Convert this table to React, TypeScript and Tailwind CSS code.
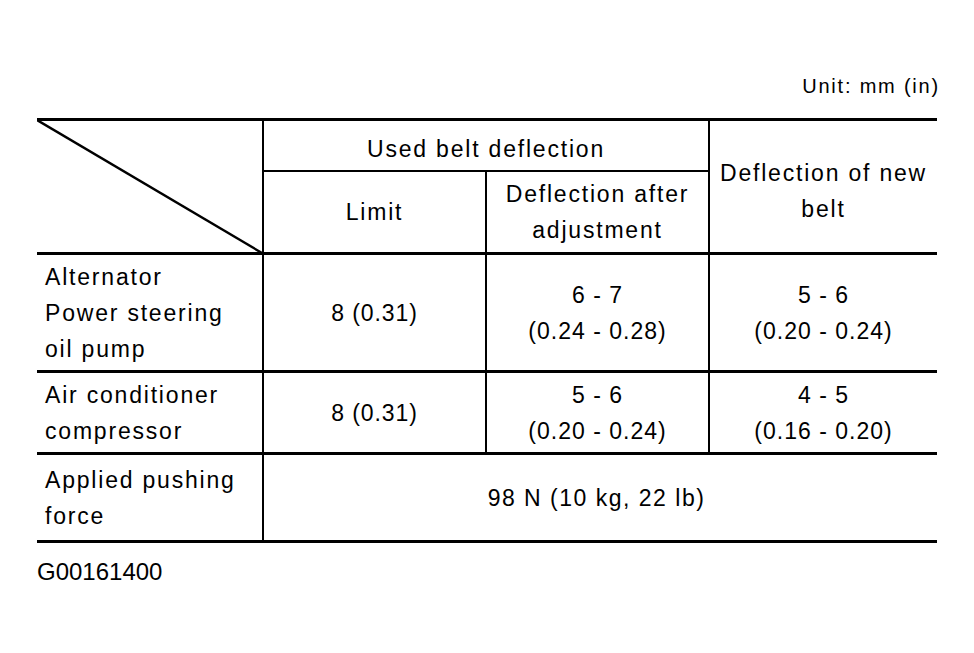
import React from "react";

const font = { fontFamily: '"Liberation Sans", Arial, Helvetica, sans-serif' };

function Lines({ lines }: { lines: string[] }) {
  return (
    <div>
      {lines.map((l, i) => (
        <div key={i}>{l}</div>
      ))}
    </div>
  );
}

export default function App() {
  return (
    <div
      className="w-[974px] h-[653px] bg-white text-black pt-[76px] pl-[37px]"
      style={font}
    >
      <div className="w-[903px] flex justify-end text-[20px] leading-[20px] tracking-[1.8px]">
        Unit: mm (in)
      </div>
      <div className="mt-[22px] w-[900px] border-t-[3px] border-b-[3px] border-black text-[23px] leading-[36px] tracking-[1.8px]">
        {/* Header */}
        <div className="flex h-[134px] border-b-[3px] border-black">
          <div className="relative w-[227px] shrink-0 border-r-2 border-black">
            <svg
              className="absolute left-0 top-0"
              width="227"
              height="134"
              viewBox="0 0 227 134"
            >
              <line x1="0" y1="-1" x2="225" y2="132" stroke="black" strokeWidth="2.4" />
            </svg>
          </div>
          <div className="w-[446px] shrink-0 border-r-2 border-black flex flex-col">
            <div className="h-[51px] shrink-0 border-b-2 border-black flex items-center justify-center pt-[6px]">
              Used belt deflection
            </div>
            <div className="flex flex-1">
              <div className="w-[223px] shrink-0 border-r-2 border-black flex items-center justify-center">
                Limit
              </div>
              <div className="flex-1 flex items-center justify-center text-center">
                <Lines lines={["Deflection after", "adjustment"]} />
              </div>
            </div>
          </div>
          <div className="flex-1 flex items-center justify-center text-center pt-[8px]">
            <Lines lines={["Deflection of new", "belt"]} />
          </div>
        </div>

        {/* Row 1 */}
        <div className="flex h-[118px] border-b-[3px] border-black">
          <div className="w-[227px] shrink-0 border-r-2 border-black flex items-center pl-[8px]">
            <Lines lines={["Alternator", "Power steering", "oil pump"]} />
          </div>
          <div className="w-[223px] shrink-0 border-r-2 border-black flex items-center justify-center tracking-[0.9px]">
            8 (0.31)
          </div>
          <div className="w-[223px] shrink-0 border-r-2 border-black flex items-center justify-center text-center tracking-[1px]">
            <Lines lines={["6 - 7", "(0.24 - 0.28)"]} />
          </div>
          <div className="flex-1 flex items-center justify-center text-center tracking-[1px]">
            <Lines lines={["5 - 6", "(0.20 - 0.24)"]} />
          </div>
        </div>

        {/* Row 2 */}
        <div className="flex h-[82px] border-b-[3px] border-black">
          <div className="w-[227px] shrink-0 border-r-2 border-black flex items-center pl-[8px]">
            <Lines lines={["Air conditioner", "compressor"]} />
          </div>
          <div className="w-[223px] shrink-0 border-r-2 border-black flex items-center justify-center tracking-[0.9px]">
            8 (0.31)
          </div>
          <div className="w-[223px] shrink-0 border-r-2 border-black flex items-center justify-center text-center tracking-[1px]">
            <Lines lines={["5 - 6", "(0.20 - 0.24)"]} />
          </div>
          <div className="flex-1 flex items-center justify-center text-center tracking-[1px]">
            <Lines lines={["4 - 5", "(0.16 - 0.20)"]} />
          </div>
        </div>

        {/* Row 3 */}
        <div className="flex h-[85px]">
          <div className="w-[227px] shrink-0 border-r-2 border-black flex items-center pl-[8px]">
            <Lines lines={["Applied pushing", "force"]} />
          </div>
          <div className="flex-1 flex items-center justify-center tracking-[1.5px] pr-[8px]">
            98 N (10 kg, 22 lb)
          </div>
        </div>
      </div>
      <div className="mt-[17px] text-[24px] leading-[24px]">G00161400</div>
    </div>
  );
}
